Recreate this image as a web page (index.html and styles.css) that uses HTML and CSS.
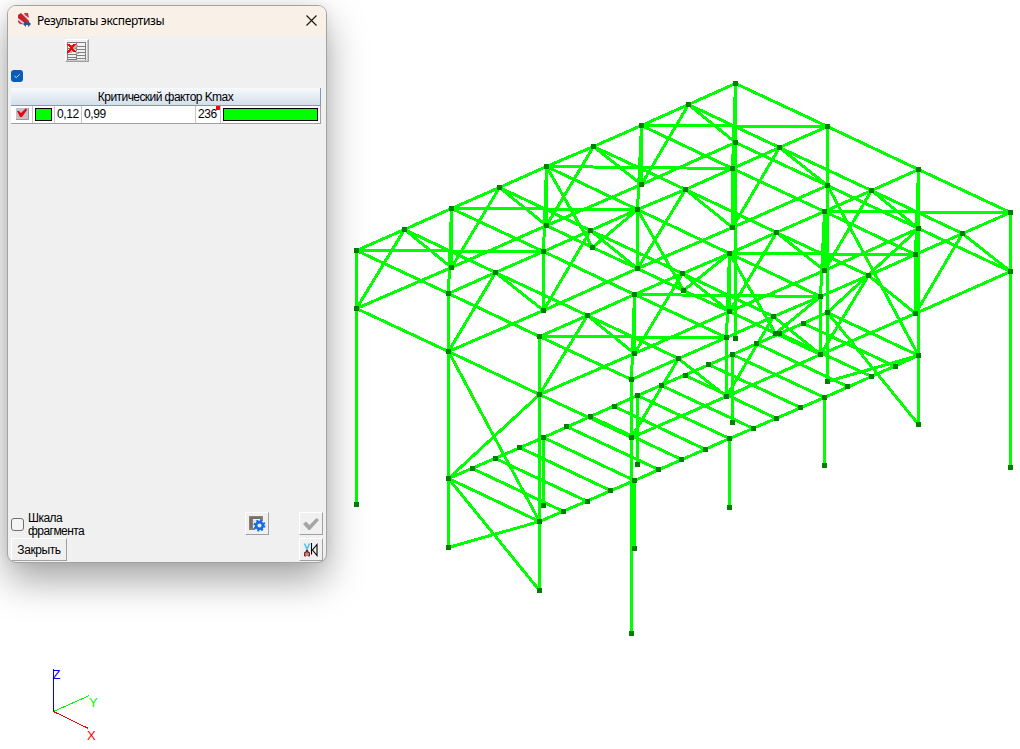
FILE: index.html
```html
<!DOCTYPE html>
<html lang="ru">
<head>
<meta charset="utf-8">
<title>Результаты экспертизы</title>
<link rel="stylesheet" href="styles.css">
</head>
<body>
<main class="viewport">
  <svg class="scene" width="1020" height="749" viewBox="0 0 1020 749">
    <g transform="translate(.5 .5)">
      <g class="bars">
        <!-- top chords, long direction -->
        <path d="M356 250L404 229 451 208 499 187 546 166 593 146 641 125 688 104 735 83M448 293L495 272 543 251 590 230 637 209 685 189 732 168 779 147 827 126M539 336L587 315 634 294 682 273 729 253 776 232 824 211 871 190 918 169M631 379L678 358 726 337 773 316 820 296 868 275 915 254 962 233 1010 212"/>
        <!-- top chords, cross direction -->
        <path d="M356 250L448 293 539 336 631 379M451 208L543 251 634 294 726 337M546 166L637 209 729 253 820 296M641 125L732 168 824 211 915 254M735 83L827 126 918 169 1010 212"/>
        <path d="M404 229L495 272 587 315 678 358M499 187L590 230 682 273 773 316M593 146L685 189 776 232 868 275M688 104L779 147 871 190 962 233"/>
        <!-- bottom chords -->
        <path d="M356 308L451 267 546 225 641 184 735 142M448 351L543 310 637 268 732 227 827 185M539 394L634 353 729 311 824 270 918 228M631 437L726 396 820 354 915 313 1010 271"/>
        <path d="M356 308L448 351 539 394 631 437M546 225L592 247 637 268 683 290 729 311 775 333 820 354M735 142L827 185 918 228 1010 271"/>
        <!-- truss diagonals -->
        <path d="M356 308L404 229 451 267 499 187 546 225 593 146 641 184 688 104 735 142M448 351L495 272 543 310 590 230 637 268 685 189 732 227 779 147 827 185M539 394L587 315 634 353 682 273 729 311 776 232 824 270 871 190 918 228M631 437L678 358 726 396 773 316 820 354 868 275 915 313 962 233 1010 271"/>
        <path d="M546 166L592 247 637 209 683 290 729 253 775 333 820 296"/>
        <!-- roof plane bracing -->
        <path d="M356 250L543 251M451 208L637 209M546 166L732 168M641 125L827 126M539 336L726 337M634 294L820 296M729 253L915 254M824 211L1010 212"/>
        <path d="M451 208L448 293M546 166L543 251M641 125L637 209M735 83L732 168M634 294L631 379M729 253L726 337M824 211L820 296M918 169L915 254"/>
        <!-- posts and columns -->
        <path d="M356 250V504M448 293V547M539 336V590M631 379V633M735 83V338M827 126V381M918 169V424M1010 212V467M451 208V267M546 166V225M641 125V184M543 251V310M637 209V268M732 168V227M634 294V353M729 253V311M824 211V270M726 337V396M820 296V354M915 254V313M543 437V505M637 395V464M732 354V422M634 480V548M729 438V507M824 397V465"/>
        <!-- deck -->
        <path d="M448 478L543 437 637 395 732 354 827 312M539 521L634 480 729 438 824 397 918 355"/>
        <path d="M448 478L539 521M472 468L563 511M495 458L587 501M519 447L610 490M543 437L634 480M566 426L658 469M590 416L681 459M614 406L705 449M637 395L729 438M661 385L753 428M685 375L776 418M708 364L800 407M732 354L824 397M756 343L847 386M779 333L871 376M803 323L895 366M827 312L918 355"/>
        <!-- end wall bracing -->
        <path d="M448 351L539 521 448 547M539 394L448 478 539 590M827 185L918 355 827 381M918 228L827 312 918 424"/>
      </g>
      <path class="joints" d="M356 250h0M404 229h0M451 208h0M499 187h0M546 166h0M593 146h0M641 125h0M688 104h0M735 83h0M448 293h0M495 272h0M543 251h0M590 230h0M637 209h0M685 189h0M732 168h0M779 147h0M827 126h0M539 336h0M587 315h0M634 294h0M682 273h0M729 253h0M776 232h0M824 211h0M871 190h0M918 169h0M631 379h0M678 358h0M726 337h0M773 316h0M820 296h0M868 275h0M915 254h0M962 233h0M1010 212h0M356 308h0M451 267h0M546 225h0M641 184h0M735 142h0M448 351h0M543 310h0M637 268h0M732 227h0M827 185h0M539 394h0M634 353h0M729 311h0M824 270h0M918 228h0M631 437h0M726 396h0M820 354h0M915 313h0M1010 271h0M592 247h0M683 290h0M775 333h0M448 478h0M472 468h0M495 458h0M519 447h0M543 437h0M566 426h0M590 416h0M614 406h0M637 395h0M661 385h0M685 375h0M708 364h0M732 354h0M756 343h0M779 333h0M803 323h0M827 312h0M539 521h0M563 511h0M587 501h0M610 490h0M634 480h0M658 469h0M681 459h0M705 449h0M729 438h0M753 428h0M776 418h0M800 407h0M824 397h0M847 386h0M871 376h0M895 366h0M918 355h0M356 504h0M448 547h0M539 590h0M631 633h0M735 338h0M827 381h0M918 424h0M1010 467h0M543 505h0M637 464h0M732 422h0M634 548h0M729 507h0M824 465h0"/>
      <g class="axes">
        <path class="axis-z" d="M53 668V711"/>
        <path class="axis-y" d="M53 711L89 695"/>
        <path class="axis-x" d="M53 711L88 728"/>
      </g>
    </g>
    <g class="axis-labels">
      <text class="label-z" x="52.500" y="679">Z</text>
      <text class="label-y" x="89" y="707">Y</text>
      <text class="label-x" x="87" y="740">X</text>
    </g>
  </svg>

  <section class="dialog">
    <header class="titlebar">
      <svg class="app-icon" width="15" height="15" viewBox="0 0 15 15">
        <path d="M2 1H10L12 9 9 12H3L1 9Z" fill="#d8dbe0"/>
        <path d="M1 2L4 0 12 8V11L9 11 1 5Z" fill="#c8202c"/>
        <path d="M7 0H11L12 5 8 2ZM1 7L6 11H3L1 9Z" fill="#d5303a"/>
        <path d="M6 11L9 8V10H11V8L14 11 11 14V12H9V14Z" fill="#1f5596"/>
      </svg>
      <h1 class="title">Результаты экспертизы</h1>
      <svg class="close" width="11" height="11" viewBox="0 0 11 11"><path d="M.5 .5L10.500 10.500M10.500 .5L.5 10.500"/></svg>
    </header>
    <div class="content">
      <div class="toolbar">
        <button class="btn btn-table">
          <svg width="20" height="20" viewBox="0 0 20 20" shape-rendering="crispEdges">
            <path d="M1 1.500H9M10 1.500H19M1 4.500H9M10 5.500H19M1 7.500H9M10 8.500H19M1 10.500H9M10 11.500H19M1 13.500H9M10 14.500H19M1 16.500H9M10 17.500H19M0 18.500H9" stroke="#808080"/>
            <path d="M.5 1V19M9.500 1V19M18.500 1V19" stroke="#808080"/>
            <path d="M4 5L11 13M10 4L3 12" stroke="#b0b0b0" stroke-width="2"/>
            <path d="M1 3L8 11M8 3L0 12" stroke="#f00" stroke-width="2"/>
          </svg>
        </button>
      </div>
      <span class="check-on"><svg width="12" height="12" viewBox="0 0 12 12"><path d="M3.500 6L5.300 7.600 8.500 4.400"/></svg></span>
      <div class="table">
        <div class="table-head">Критический фактор Kmax</div>
        <div class="table-row">
          <div class="cell cell-check">
            <svg width="13" height="12" viewBox="0 0 13 12"><path d="M0 0H12V11H0Z" fill="#c3c3c3"/><path d="M0 11.500H12.500V0" fill="none" stroke="#999"/><path d="M1 3L3 3 5 5 10 0 11 2 6 9 4 9Z" fill="#f00018"/></svg>
          </div>
          <div class="cell cell-color"><span class="swatch"></span></div>
          <div class="cell cell-low">0,12</div>
          <div class="cell cell-high">0,99</div>
          <div class="cell cell-count">236<i class="mark"></i></div>
          <div class="cell cell-bar"><span class="swatch"></span></div>
        </div>
      </div>
      <footer class="footer">
        <div class="footer-row">
          <label class="option"><span class="check-off"></span><span class="option-text">Шкала<br>фрагмента</span></label>
          <button class="btn btn-settings">
            <svg width="18" height="18" viewBox="0 0 18 18">
              <path d="M1 1H15V6H12V4H5V13H7V15H1Z" fill="#8a8078"/><path d="M5 5H12V8H7V12H5Z" fill="#e2e2e2"/>
              <path d="M3 3H13M3 3V13" stroke="#655d55" fill="none"/>
              <circle cx="11.500" cy="10.500" r="3.400" fill="#e6e6e6" stroke="#136bea" stroke-width="2.600"/>
              <circle cx="11.500" cy="10.500" r="5" fill="none" stroke="#136bea" stroke-width="2" stroke-dasharray="2 1.930"/>
            </svg>
          </button>
          <button class="btn btn-apply">
            <svg width="18" height="14" viewBox="0 0 18 14"><path d="M1 7L4 4.500 7.500 8 14.500 1 17 3 8 13H6.500Z" fill="#a5a5a5"/></svg>
          </button>
        </div>
        <div class="footer-row footer-row-last">
          <button class="btn btn-close">Закрыть</button>
          <button class="btn btn-cut">
            <svg width="16" height="16" viewBox="0 0 16 16">
              <path d="M1.500 1.500L4.300 8M6.500 1.500L3.700 8" stroke="#50c4f5" stroke-width="1.700" fill="none"/>
              <path d="M4 8L2.500 11M4 8L5.500 11" stroke="#702020" stroke-width="1.500"/>
              <path d="M1.500 10.500H3V14H1.500ZM5 10.500H6.500V14H5Z" stroke="#802020" fill="none"/>
              <path d="M8.500 1V12.500M14 2.500V13.500L9.500 8Z" stroke="#000" stroke-width="1.100" fill="none"/>
            </svg>
          </button>
        </div>
      </footer>
    </div>
  </section>
</main>
</body>
</html>
```
FILE: styles.css
```css
* { box-sizing: border-box; }
body { margin: 0; background: #fff; overflow: hidden; }
.viewport { position: relative; width: 1020px; height: 749px; overflow: hidden; font: 12px "Liberation Sans", Arial, sans-serif; color: #000; }
.scene { position: absolute; left: 0; top: 0; }
.bars { fill: none; stroke: #0f0; stroke-width: 3; shape-rendering: crispEdges; }
.joints { fill: none; stroke: #008000; stroke-width: 5; stroke-linecap: square; shape-rendering: crispEdges; }
.axes { fill: none; stroke-width: 1; shape-rendering: crispEdges; }
.axis-z { stroke: #00f; }
.axis-y { stroke: #0f0; }
.axis-x { stroke: #f00; }
.axis-labels { font-size: 13px; }
.label-z { fill: #00f; }
.label-y { fill: #0f0; }
.label-x { fill: #f00; }

.dialog {
  position: absolute; left: 7px; top: 5px; width: 320px; height: 558px;
  display: flex; flex-direction: column;
  background: #f0f0f0; border: 1px solid #a3a3a3; border-radius: 9px;
  box-shadow: 0 17px 38px rgba(0, 0, 0, .36), 0 0 12px rgba(0, 0, 0, .06);
}
.titlebar { display: flex; align-items: center; height: 30px; padding: 0 9px 2px; background: #f9f1e7; border-radius: 8px 8px 0 0; }
.app-icon { margin-right: 5px; }
.title { flex: 1; margin: 0; font: 12px "Noto Sans", "Open Sans", sans-serif; letter-spacing: -.36px; }
.close { fill: none; stroke: #1a1a1a; stroke-width: 1.2; }
.content { flex: 1; display: flex; flex-direction: column; padding: 3px 3px 0; }
.toolbar { display: flex; padding-left: 54px; }
.btn {
  display: flex; align-items: center; justify-content: center; width: 24px; height: 23px; padding: 0;
  background: #f0f0f0; border: 1px solid; border-color: #fff #a0a0a0 #a0a0a0 #fff;
  font: inherit; color: inherit;
}
.btn-table { box-shadow: inset -1px -1px #c8c8c8; }
.check-on { width: 12px; height: 12px; margin-top: 8px; background: #0a5cb8; border-radius: 3px; }
.check-on svg { display: block; fill: none; stroke: #d5e5f5; }
.table { margin: 6px 2px 0 0; }
.table-head { height: 18px; line-height: 18px; text-align: center; letter-spacing: -.56px; background: linear-gradient(#f7f9fc, #d5dfec); border-right: 1px solid #8299bb; border-bottom: 1px solid #8299bb; }
.table-row { display: flex; height: 18px; background: #fff; border-right: 1px solid #a0a0a0; border-bottom: 1px solid #a0a0a0; }
.cell { position: relative; height: 17px; line-height: 17px; letter-spacing: -.4px; border-right: 1px solid #c6c6c6; }
.cell-check { width: 22px; padding: 2px 0 0 5px; }
.cell-check svg { display: block; }
.cell-color { width: 22px; padding: 2px; }
.swatch { display: block; height: 13px; background: #0f0; border: 1px solid #000; }
.cell-low { width: 27px; padding-left: 2px; }
.cell-high { width: 114px; padding-left: 2px; }
.cell-count { width: 25px; padding-left: 2px; line-height: 16px; }
.mark { position: absolute; right: 0; top: 0; width: 4px; height: 4px; background: #f00; }
.cell-bar { flex: 1; padding: 2px; border-right: 0; }
.footer { margin-top: auto; }
.footer-row { display: flex; height: 26px; align-items: flex-start; }
.footer-row-last { height: 24px; }
.option { display: flex; align-items: center; flex: 1; gap: 4px; line-height: 13px; letter-spacing: -.55px; }
.check-off { width: 13px; height: 13px; margin-top: -1px; background: #f4f4f4; border: 1px solid #707070; border-radius: 3px; }
.btn-settings { margin-right: 30px; }
.btn-close { width: 56px; margin-right: auto; letter-spacing: -.4px; }
```
